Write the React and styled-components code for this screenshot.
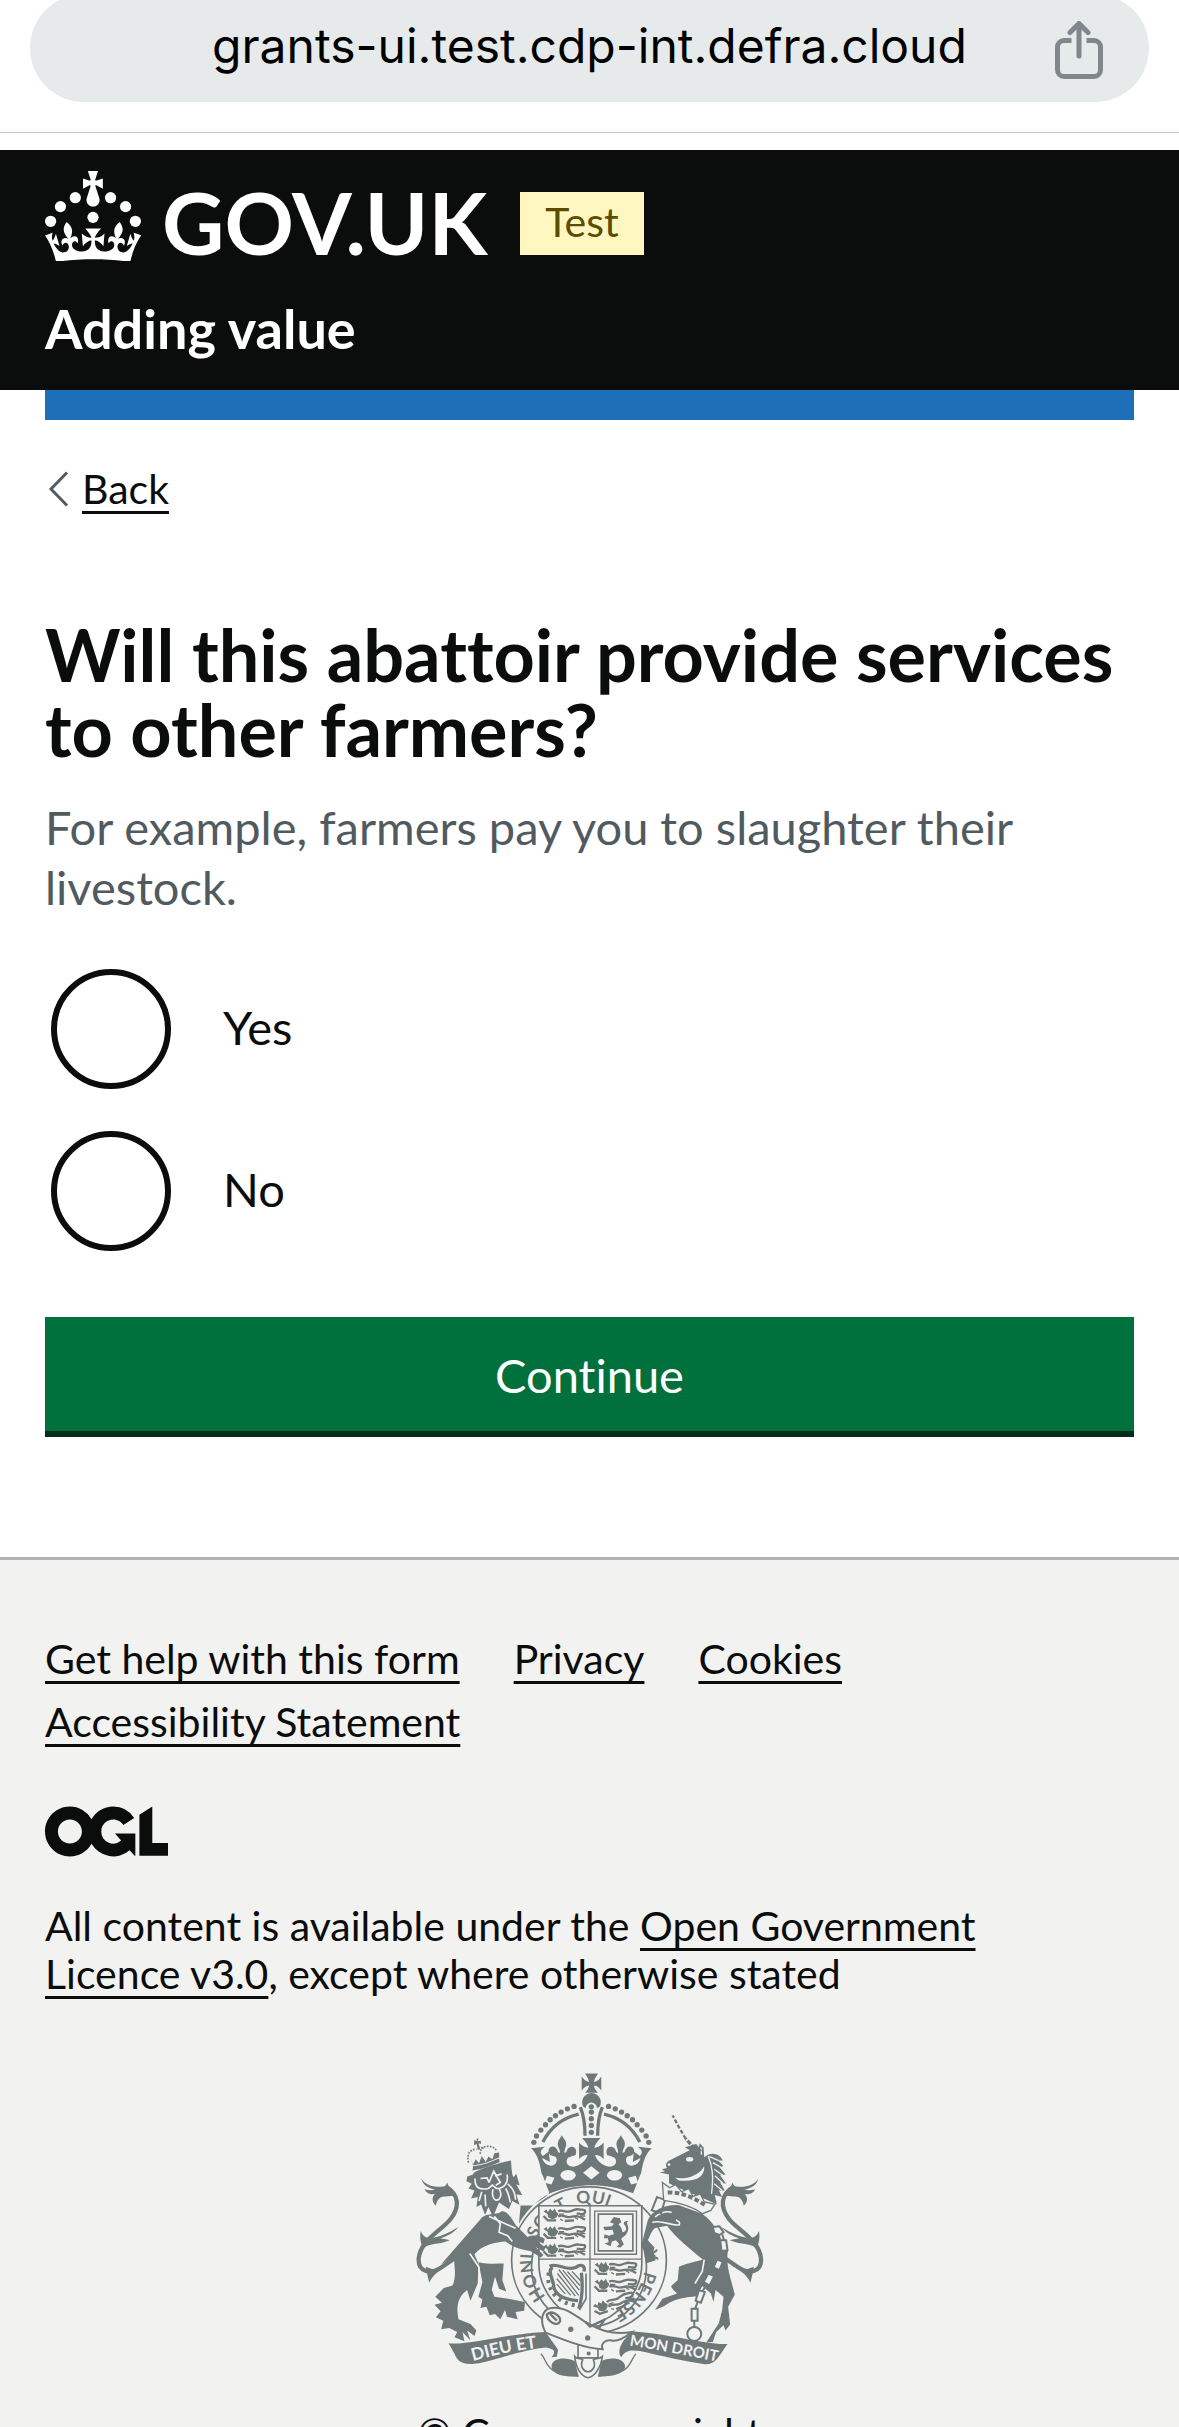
import React, { useId } from 'react';
import styled, { createGlobalStyle } from 'styled-components';

const ink = '#0b0c0c';
const footerBg = '#f2f2f0';
const crest = '#6e7879';

const GlobalStyle = createGlobalStyle`
  *, *::before, *::after { box-sizing: border-box; }
  body {
    margin: 0;
    background: #fff;
    color: ${ink};
    font-family: Lato, "Liberation Sans", sans-serif;
    font-variant-ligatures: none;
    overflow-x: hidden;
  }
`;

/* Browser address bar */
const AddressBar = styled.div`
  display: flex;
  height: 133px;
  margin-bottom: 17px;
  padding: 0 30px;
  overflow: hidden;
  border-bottom: 1px solid #c6c8c9;
`;

const AddressPill = styled.div`
  display: grid;
  grid-template-columns: 48px 1fr 48px;
  align-items: center;
  flex: 1;
  height: 108px;
  margin-top: -6px;
  padding: 0 46px;
  border-radius: 54px;
  background: #e6eaeb;
`;

const Address = styled.span`
  grid-column: 2;
  padding-bottom: 4px;
  color: #000;
  font: 400 48px/60px Inter, "Liberation Sans", sans-serif;
  text-align: center;
`;

const ShareButton = styled.button`
  display: flex;
  padding: 3px 0 0;
  border: 0;
  background: none;
  color: #80868b;
`;

/* Service header */
const Header = styled.header`
  padding: 21px 45px 31px;
  background: ${ink};
  color: #fff;
`;

const Masthead = styled.div`
  display: flex;
  align-items: flex-end;
  height: 90px;
  margin-bottom: 38px;
`;

const HomeLink = styled.a`
  display: flex;
  align-items: flex-end;
  gap: 21px;
  color: inherit;
  text-decoration: none;
`;

const Wordmark = styled.span`
  font-size: 86px;
  font-weight: 700;
  line-height: 78px;
`;

const PhaseTag = styled.strong`
  margin: 0 0 6px 33px;
  padding: 0 25px 3px;
  background: #fff7bf;
  color: #594d00;
  font-size: 41px;
  font-weight: 400;
  line-height: 60px;
`;

const ServiceName = styled.a`
  display: block;
  color: inherit;
  font-size: 54px;
  font-weight: 700;
  line-height: 60px;
  text-decoration: none;
`;

const Container = styled.div`
  margin: 0 45px;
`;

const BlueBar = styled.div`
  height: 30px;
  background: #1d70b8;
`;

/* Page content */
const Link = styled.a`
  color: ${ink};
  font-size: 41px;
  line-height: 48px;
  text-decoration: underline;
  text-decoration-thickness: 3px;
  text-underline-offset: 7px;
`;

const BackRow = styled.nav`
  display: flex;
  align-items: center;
  gap: 13px;
  margin: 45px 0 104px;
  padding-left: 4px;
`;

const Main = styled.main`
  padding-bottom: 120px;
`;

const Fieldset = styled.fieldset`
  margin: 0 0 66px;
  padding: 0;
  border: 0;
`;

const Legend = styled.legend`
  padding: 0;
`;

const Heading = styled.h1`
  margin: 0 0 30px;
  font-size: 72px;
  font-weight: 700;
  line-height: 75px;
`;

const Hint = styled.p`
  margin: 0 0 52px;
  color: #505a5f;
  font-size: 47px;
  line-height: 60px;
`;

const RadioList = styled.div`
  display: grid;
  gap: 42px;
`;

const RadioRow = styled.div`
  display: flex;
  align-items: center;
  padding-left: 6px;
`;

const RadioInput = styled.input`
  appearance: none;
  width: 120px;
  height: 120px;
  margin: 0;
  border: 6px solid ${ink};
  border-radius: 50%;
  background: #fff;

  &:checked {
    background: radial-gradient(${ink} 30px, #fff 31px);
  }
`;

const RadioLabel = styled.label`
  padding: 0 45px 4px 52px;
  font-size: 47px;
  line-height: 60px;
`;

const ContinueButton = styled.button`
  display: block;
  width: 100%;
  height: 120px;
  padding: 2px 0 0;
  border: 0;
  border-bottom: 6px solid #002d18;
  background: #00703c;
  color: #fff;
  font: inherit;
  font-variant-ligatures: none;
  font-size: 47px;
  line-height: 60px;
  text-align: center;
`;

/* Footer */
const Footer = styled.footer`
  padding: 75px 45px 45px;
  border-top: 3px solid #b1b4b6;
  background: ${footerBg};
`;

const FooterLinks = styled.ul`
  display: flex;
  flex-wrap: wrap;
  gap: 15px 54px;
  margin: 0 0 60px;
  padding: 0;
  list-style: none;
  font-size: 41px;
  line-height: 48px;
`;

const Licence = styled.p`
  margin: 45px 45px 75px 0;
  font-size: 41px;
  line-height: 48px;
`;

const CopyrightLink = styled.a`
  display: flex;
  flex-direction: column;
  align-items: center;
  gap: 30px;
  color: ${ink};
  font-size: 41px;
  line-height: 48px;
  text-decoration: none;
`;

const Block = styled.svg`
  display: block;
  flex: none;
`;

function ShareIcon() {
  return (
    <Block width="48" height="58" viewBox="0 0 48 58" fill="none" stroke="currentColor" aria-hidden="true">
      <path strokeWidth="5" d="M16.500 19.500H9a6.500 6.500 0 0 0-6.500 6.500v23A6.500 6.500 0 0 0 9 55.500h30a6.500 6.500 0 0 0 6.500-6.500V26a6.500 6.500 0 0 0-6.500-6.500h-7.500" />
      <path strokeWidth="5" strokeLinecap="round" strokeLinejoin="round" d="M24 35V3M15 11.500l9-9 9 9" />
    </Block>
  );
}

function CrownIcon() {
  return (
    <Block width="96" height="90" viewBox="0 0 63.400 59.400" fill="currentColor" aria-hidden="true">
      <circle cx="20" cy="17.600" r="3.700" />
      <circle cx="10.200" cy="23.500" r="3.700" />
      <circle cx="3.700" cy="33.200" r="3.700" />
      <circle cx="31.700" cy="30.600" r="3.700" />
      <circle cx="43.300" cy="17.600" r="3.700" />
      <circle cx="53.200" cy="23.500" r="3.700" />
      <circle cx="59.700" cy="33.200" r="3.700" />
      <path d="M33.1,9.8c.2-.1.3-.3.5-.5l4.6,2.400v-6.800l-4.600,1.500c-.1-.2-.3-.3-.5-.5l1.900-5.900h-6.700l1.900,5.900c-.2.1-.3.3-.5.5l-4.600-1.500v6.800l4.600-2.400c.1.2.3.3.5.5l-2.600,8c-.9,2.800,1.200,5.700,4.100,5.700h0c3,0,5.100-2.900,4.100-5.700l-2.600-8ZM37,37.900s-3.400,3.800-4.100,6.100c2.200,0,4.200-.5,6.400-2.800l-.7,8.500c-2-2.800-4.400-4.100-5.700-3.800.1,3.100.5,6.700,5.800,7.200,3.700.3,6.700-1.500,7-3.800.4-2.600-2-4.300-3.700-1.600-1.400-4.500,2.400-6.100,4.900-3.200-1.900-4.500-1.800-7.700,2.400-10.900,3,4,2.600,7.300-1.200,11.100,2.400-1.300,6.200,0,4,4.600-1.200-2.800-3.700-2.200-4.200.2-.3,1.700.7,3.700,3,4.200,1.900.3,4.700-.9,7-5.900-1.300,0-2.400.7-3.900,1.700l2.400-8c.6,2.300,1.400,3.700,2.200,4.500.6-1.600.5-2.800,0-5.300l5,1.800c-2.600,3.600-5.200,8.700-7.300,17.500-7.400-1.100-15.700-1.700-24.500-1.700h0c-8.800,0-17.100.6-24.500,1.700-2.100-8.900-4.700-13.900-7.300-17.500l5-1.800c-.5,2.500-.6,3.700,0,5.300.8-.8,1.600-2.300,2.200-4.500l2.400,8c-1.500-1-2.600-1.700-3.900-1.700,2.300,5,5.200,6.200,7,5.900,2.300-.4,3.300-2.400,3-4.200-.5-2.400-3-3.100-4.200-.2-2.200-4.600,1.600-6,4-4.600-3.700-3.700-4.200-7.100-1.200-11.100,4.200,3.200,4.300,6.400,2.400,10.900,2.500-2.800,6.300-1.300,4.900,3.200-1.800-2.700-4.100-1-3.700,1.600.3,2.300,3.300,4.100,7,3.800,5.400-.5,5.700-4.200,5.800-7.200-1.300-.2-3.700,1-5.700,3.800l-.7-8.500c2.200,2.300,4.200,2.700,6.400,2.800-.7-2.300-4.100-6.100-4.100-6.100h10.600,0Z" />
    </Block>
  );
}

function ChevronIcon() {
  return (
    <Block width="20" height="36" viewBox="0 0 20 36" fill="none" stroke="#505a5f" strokeWidth="3" aria-hidden="true">
      <path d="M18 1.500 2 18l16 16.500" />
    </Block>
  );
}

function OglLogo() {
  return (
    <Block role="img" aria-label="Open Government Licence" width="123" height="51" viewBox="0 0 483.200 195.700" fill={ink}>
      <path d="M421.5 142.8V.1l-50.7 32.3v161.1h112.4v-50.7zm-122.3-9.6A47.12 47.12 0 0 1 221 97.8c0-26 21.1-47.1 47.1-47.1 16.7 0 31.4 8.7 39.7 21.8l42.7-27.2A97.63 97.63 0 0 0 268.1 0c-36.5 0-68.3 20.1-85.1 49.700A98 98 0 0 0 97.8 0C43.9 0 0 43.9 0 97.8s43.9 97.8 97.8 97.8c36.5 0 68.3-20.1 85.1-49.700a97.760 97.760 0 0 0 149.600 25.400l19.400 22.200h3v-87.800h-80l24.300 27.500zM97.8 145c-26 0-47.1-21.1-47.1-47.1s21.1-47.1 47.1-47.1 47.1 21.1 47.1 47.1S123.8 145 97.8 145" />
    </Block>
  );
}

const archBeads = [
  [405, 275], [413, 256], [426, 238], [440, 222], [454, 207],
  [470, 195], [487, 184], [506, 174], [526, 167],
];

function CrownHalf() {
  return (
    <g>
      {archBeads.map(([x, y]) => <circle key={x} cx={x} cy={y} r="8" />)}
      <path fill="none" stroke={crest} strokeWidth="10" d="M432 274C456 228 494 200 540 190M545 169C555 194 559 224 559 255" />
      <path d="M579 262H550C560 272 567 282 569 291 558 291 550 284 541 276V325C549 316 558 312 567 313 562 328 548 343 528 348 508 350 500 338 505 326 508 318 513 322 518 317L530 314C536 300 530 288 520 288 510 288 505 295 503 304L497 307C496 296 504 288 502 276 500 266 492 262 489 254 484 264 478 268 477 278 476 290 484 296 484 307L478 304C474 290 464 284 454 290 444 298 450 316 462 316 468 316 472 318 474 326 474 344 458 350 444 342 436 336 432 330 430 322L453 334 450 303 432 316C422 306 424 298 438 288L396 293C412 306 422 330 428 368L432 376 452 428C500 410 540 404 579 404Z" />
      <g fill={footerBg}>
        <ellipse cx="508" cy="374" rx="23" ry="16" />
        <path d="M444 376 467 382 458 402 437 397Z" />
      </g>
    </g>
  );
}

function PassantLion({ x, y }) {
  return (
    <g transform={`translate(${x} ${y})`} fill="none" stroke={crest} strokeWidth="7">
      <path fill={crest} stroke="none" d="M0 10 9 4 13 12 20 2 27 9 34 1 38 11 44 16C42 28 34 33 25 33L14 28 12 18Z" />
      <path d="M44 10C56 2 64 14 78 10S98 2 106 4 128 2 125 12 112 18 100 16M44 25C58 17 68 30 80 27S104 20 125 35M10 37H38M64 39 92 37M0 24 12 36" />
      <path strokeWidth="4" d="M46 18H62M92 26 104 34M50 33 58 38M110 24 126 24" />
    </g>
  );
}

function CrestTail() {
  return (
    <g>
      <path fill="none" stroke={crest} strokeWidth="13" d="M140 408C180 432 182 470 155 505 128 540 62 570 58 626 56 668 96 672 126 652L170 622" />
      <path d="M66 384C78 404 104 412 134 408 140 406 142 402 144 396 150 416 160 424 164 436L140 438C120 436 112 452 110 466 96 454 98 438 108 430 92 434 80 426 76 416 88 420 98 420 108 418 84 412 70 402 66 384Z" />
      <path d="M178 530C160 540 142 552 112 560 84 568 72 560 64 542 60 566 66 584 72 596 88 576 116 586 152 570 140 566 130 566 124 564 150 556 166 544 178 530ZM80 650C82 666 86 684 90 698 96 684 104 674 118 664Z" />
    </g>
  );
}

function RoyalArms() {
  const ring = useId();
  const leftBanner = useId();
  const rightBanner = useId();
  return (
    <Block width="348" height="306" viewBox="50 68 1048 918" fill={crest} role="img" aria-label="Royal coat of arms">
      <defs>
        <path id={ring} d="M571 806A184 175 0 0 1 571 457A184 175 0 0 1 571 806" />
        <path id={leftBanner} d="M222 934Q330 902 450 890" />
        <path id={rightBanner} d="M692 887Q810 905 980 940" />
      </defs>

      <CrestTail />
      <g transform="translate(1147 0) scale(-1 1)"><CrestTail /></g>

      {/* Garter */}
      <ellipse cx="571" cy="630" rx="233" ry="221" fill={footerBg} stroke={crest} strokeWidth="5" />
      <ellipse cx="571" cy="650" rx="173" ry="180" fill={footerBg} stroke={crest} strokeWidth="5" />
      <path d="M365 465H400C440 440 450 434 452 424L500 412C430 430 390 470 360 520Z" />
      <g fontFamily="Lato, sans-serif" fontSize="52" fontWeight="700">
        <text><textPath href={`#${ring}`} startOffset="150">HONI</textPath></text>
        <text><textPath href={`#${ring}`} startOffset="335">SO</textPath></text>
        <text><textPath href={`#${ring}`} startOffset="440">T</textPath></text>
        <text><textPath href={`#${ring}`} startOffset="500">QUI</textPath></text>
        <text><textPath href={`#${ring}`} startOffset="650">A</textPath></text>
        <text><textPath href={`#${ring}`} startOffset="772">Y</textPath></text>
        <text><textPath href={`#${ring}`} startOffset="836">PENSE</textPath></text>
      </g>

      {/* Crown */}
      <path d="M559 68H598C590 80 587 86 586 93 596 92 602 86 608 77V119C602 110 596 105 586 104 587 112 591 118 598 126H559C566 118 570 112 571 104 562 105 556 110 549 119V77C556 86 562 92 571 93 570 86 567 80 559 68Z" />
      <path d="M554 168A28 28 0 1 1 603 168L595 172A17 17 0 0 0 561 172Z" />
      {[168, 184, 204, 224, 245].map((y) => <circle key={y} cx="578" cy={y} r="8" />)}
      <CrownHalf />
      <g transform="translate(1156 0) scale(-1 1)"><CrownHalf /></g>
      <path fill={footerBg} d="M578 347 603 367 578 387 553 367Z" />

      {/* Shield */}
      <path fill={footerBg} stroke={crest} strokeWidth="5" d="M420 466H730V640C730 730 660 800 574 828 490 800 420 730 420 640Z" />
      <path fill="none" stroke={crest} strokeWidth="4" d="M574 466V828M420 627H730" />
      <PassantLion x={434} y={473} />
      <PassantLion x={434} y={526} />
      <PassantLion x={434} y={579} />
      <PassantLion x={588} y={634} />
      <PassantLion x={588} y={685} />
      <g transform="rotate(-18 640 770)"><PassantLion x={586} y={742} /></g>
      <g fill="none" stroke={crest}>
        <path strokeWidth="4" d="M588 482H714V612H588Z" />
        <path strokeWidth="5" d="M599 491H703V602H599Z" />
      </g>
      <path d="M634 516 646 500 664 504 668 516 660 522 668 532 672 546C684 544 686 532 678 524 670 514 686 508 690 514 678 514 694 526 688 542 684 556 672 560 668 566L676 582 666 592 654 590 662 582 652 570 640 574 636 588 618 580 630 576 628 564 616 564 618 552 630 556 646 552 642 538 618 540 614 530 640 528 646 520Z" />
      <g fill="none" stroke={crest}>
        <path strokeWidth="10" d="M452 648C478 636 500 664 530 652 548 640 560 646 556 664M548 668C552 700 552 740 540 776M462 652C444 660 462 684 464 704 466 730 490 748 538 752" />
        <path strokeWidth="5" d="M562 670V746L542 780" />
        <path strokeWidth="4" d="M480 658 540 736M492 660 542 720M506 664 544 706M520 664 546 692M476 670 530 738M474 686 516 736M474 702 500 732" />
        <path strokeWidth="12" strokeDasharray="9 13" d="M450 668C442 700 458 758 540 768" />
      </g>

      {/* Lion supporter */}
      <path d="M262 494 300 488C318 470 336 500 350 524L386 560C404 552 424 556 438 566L434 580 414 572 440 592 434 604 410 590 434 614 426 622 394 602C370 600 340 590 320 574 290 576 250 584 226 612L238 640 236 700 214 752 204 720C176 740 170 770 178 808L214 822 232 842 226 858 204 842 214 872 190 846 196 874 166 862 174 846 150 834 126 838 132 812 110 802 124 784 106 764 128 758 108 740 134 714 160 706C172 680 166 652 164 622L126 642 250 500Z" />
      <path d="M238 636C264 642 290 640 314 640L310 690 322 724 300 716 288 680 278 718 286 740 340 748 378 756 376 782 350 786 356 808 324 800 318 780 304 808 288 792 272 796 262 770 244 774 250 748 238 740 250 696Z" />
      <g fill="none" stroke={footerBg} strokeWidth="5">
        <path d="M286 498 304 520 300 546 326 556 340 574M212 610 240 652 240 700M270 498 350 534" />
      </g>
      <path d="M204 378 222 372C216 362 300 336 336 330L338 356C340 366 338 372 344 380L352 370 362 404 352 402 370 434 352 432 362 464 340 452 330 476 300 456 282 500 268 470 258 494 246 462 232 470 236 440 216 444 226 420 208 414 218 400 202 392Z" />
      <g fill="none" stroke={footerBg} strokeWidth="5">
        <path d="M228 384C226 410 240 420 268 414L280 404 292 414C314 416 330 396 324 372M244 384 264 382 270 396M288 376 308 370M270 396 284 362 304 396 290 404M282 416C276 440 288 456 300 446 310 436 304 420 300 414M248 424 240 452M326 400C346 416 348 432 350 448M258 432 260 468M320 414C330 430 332 446 334 456" />
      </g>
      <path d="M222 346C250 346 276 334 300 324L302 334C276 346 248 356 220 360ZM212 320 222 342 230 326 240 338 248 316 260 334 268 318 280 326 286 308 300 306 301 320C276 332 250 342 222 344ZM225 268 234 272 232 264 238 263 236 272 245 270 246 280 238 278 244 296 236 298 233 280 225 284Z" />
      <path fill="none" stroke={crest} strokeWidth="5" strokeDasharray="5 4" d="M208 336C202 310 212 296 232 296M246 292C264 284 284 284 294 302M244 310C242 300 248 292 258 290" />

      {/* Unicorn supporter */}
      <path d="M748 510C760 480 800 462 840 464L912 490C940 510 960 540 970 570L990 600C980 640 1000 690 1010 734L990 770 996 824 982 842 976 826 954 846 944 876 924 878 962 820 972 780 976 740 952 720 946 756 938 730 912 708C896 740 900 740 884 740 850 742 820 750 798 768L770 780 792 746 836 730C822 716 816 712 820 706L838 690 842 650C860 640 890 636 914 628 880 600 830 560 806 526L772 532C758 540 756 556 748 570L768 592 764 606 772 630 742 640 736 600 728 588Z" />
      <path fill="none" stroke={footerBg} strokeWidth="5" d="M762 516C790 508 816 526 842 524 850 512 830 512 836 508M820 486C800 480 780 490 770 500M918 628 912 664 890 700" />
      <path fill="none" stroke={crest} strokeWidth="6" d="M776 440 800 448 788 488 760 480ZM740 596 770 618" />
      <path d="M784 366 800 362 790 356 806 352C800 344 802 334 816 328L880 296 900 302 904 278 916 290 918 320C940 300 966 310 974 330L960 330 976 346 964 350 982 372 966 374 984 400 966 396 980 420 962 420 972 440 950 434 956 462 920 446 840 412 812 398 812 372Z" />
      <g fill={footerBg}>
        <ellipse cx="874" cy="326" rx="11" ry="7" />
        <circle cx="812" cy="342" r="4" />
        <path d="M830 382C860 388 904 376 918 346 920 378 896 394 842 390Z" />
      </g>
      <path fill="none" stroke={footerBg} strokeWidth="4" d="M908 290 910 312M930 316C944 350 946 380 940 430M934 318 962 330M944 336 968 350M948 356 974 374M950 376 974 398M948 400 972 420" />
      <path fill={footerBg} stroke={crest} strokeWidth="4" d="M792 396 814 412 832 402 850 424 872 414 884 438 906 430 918 454 950 462 938 480 912 490C880 466 840 456 796 450Z" />
      <path fill="none" stroke={crest} strokeWidth="12" strokeDasharray="14 7" d="M808 426C850 424 890 444 924 466" />
      <path fill="none" stroke={crest} strokeWidth="10" strokeDasharray="14 5" d="M890 294 862 264" />
      <path fill="none" stroke={crest} strokeWidth="7" strokeDasharray="12 6" d="M862 264 842 230 823 194" />
      <path d="M860 290 894 280 912 302 876 300Z" />
      <g fill={footerBg} stroke={crest} strokeWidth="6">
        <path d="M944 530 964 528 976 546 964 554 948 548ZM966 570 984 570 988 600 970 602ZM956 628 974 634 964 660 946 652ZM930 670 948 678 934 706 916 696ZM902 720 920 726 908 758 892 752ZM880 776H898V812H880Z" />
        <circle cx="888" cy="852" r="21" />
      </g>
      <path fill="none" stroke={crest} strokeWidth="6" d="M972 552 978 570M976 602 966 630M954 656 940 676M926 702 914 722M898 756 890 778M888 812V832" />

      {/* Motto scroll and belt */}
      <path d="M148 880C200 888 330 850 440 846L478 900 474 921 458 922C474 906 466 896 440 893 370 900 290 930 240 940 190 948 176 936 166 912Z" />
      <path d="M988 882C940 888 800 850 705 845 680 860 650 900 668 922 680 900 700 900 720 903 800 920 860 936 920 943 955 944 960 920 988 882Z" />
      <g fontFamily="Lato, sans-serif" fontWeight="700" fill={footerBg}>
        <text fontSize="52"><textPath href={`#${leftBanner}`}>DIEU ET</textPath></text>
        <text fontSize="46"><textPath href={`#${rightBanner}`}>MON DROIT</textPath></text>
      </g>
      <path d="M540 980C500 982 460 976 458 950 460 922 505 922 528 934ZM598 980C640 980 676 974 680 950 676 922 632 922 608 934Z" />
      <path fill="none" stroke={crest} strokeWidth="4" d="M426 912C450 934 430 974 540 979M712 912C690 936 704 974 598 979" />
      <path fill={footerBg} stroke={crest} strokeWidth="5" d="M538 880V924H598V880M528 920C530 950 546 980 568 984 590 980 608 950 611 920 600 930 590 924 584 930 594 950 580 966 568 966S542 950 552 930C546 924 536 930 528 920Z" />
      <path fill={footerBg} stroke={crest} strokeWidth="6" d="M448 776C490 764 520 790 560 816 600 840 640 856 700 846 680 862 660 876 640 872 616 868 606 884 612 898 560 896 500 872 440 848 426 820 424 790 448 776Z" />
      <path fill="none" stroke={crest} strokeWidth="7" d="M444 794C456 778 486 796 484 814 476 832 446 816 444 794ZM454 792 474 812M560 816 574 830 620 808M600 836 618 808" />
      <circle cx="516" cy="838" r="8" />
      <circle cx="567" cy="864" r="8" />
      <circle cx="570" cy="911" r="6" />
    </Block>
  );
}

function RadioOption({ value, children }) {
  const id = useId();
  return (
    <RadioRow>
      <RadioInput type="radio" id={id} name="abattoirServices" value={value} />
      <RadioLabel htmlFor={id}>{children}</RadioLabel>
    </RadioRow>
  );
}

const footerItems = ['Get help with this form', 'Privacy', 'Cookies', 'Accessibility Statement'];

export default function App() {
  return (
    <>
      <GlobalStyle />
      <AddressBar>
        <AddressPill>
          <Address>grants-ui.test.cdp-int.defra.cloud</Address>
          <ShareButton type="button" aria-label="Share">
            <ShareIcon />
          </ShareButton>
        </AddressPill>
      </AddressBar>

      <Header>
        <Masthead>
          <HomeLink href="#home">
            <CrownIcon />
            <Wordmark>GOV.UK</Wordmark>
          </HomeLink>
          <PhaseTag>Test</PhaseTag>
        </Masthead>
        <ServiceName href="#service">Adding value</ServiceName>
      </Header>

      <Container>
        <BlueBar />
        <BackRow>
          <ChevronIcon />
          <Link href="#back">Back</Link>
        </BackRow>
        <Main>
          <form onSubmit={(event) => event.preventDefault()}>
            <Fieldset aria-describedby="services-hint">
              <Legend>
                <Heading>Will this abattoir provide services to other farmers?</Heading>
              </Legend>
              <Hint id="services-hint">For example, farmers pay you to slaughter their livestock.</Hint>
              <RadioList>
                <RadioOption value="yes">Yes</RadioOption>
                <RadioOption value="no">No</RadioOption>
              </RadioList>
            </Fieldset>
            <ContinueButton type="submit">Continue</ContinueButton>
          </form>
        </Main>
      </Container>

      <Footer>
        <FooterLinks>
          {footerItems.map((item) => (
            <li key={item}><Link href="#footer">{item}</Link></li>
          ))}
        </FooterLinks>
        <OglLogo />
        <Licence>
          All content is available under the <Link href="#licence">Open Government Licence v3.0</Link>, except where otherwise stated
        </Licence>
        <CopyrightLink href="#copyright">
          <RoyalArms />
          © Crown copyright
        </CopyrightLink>
      </Footer>
    </>
  );
}
